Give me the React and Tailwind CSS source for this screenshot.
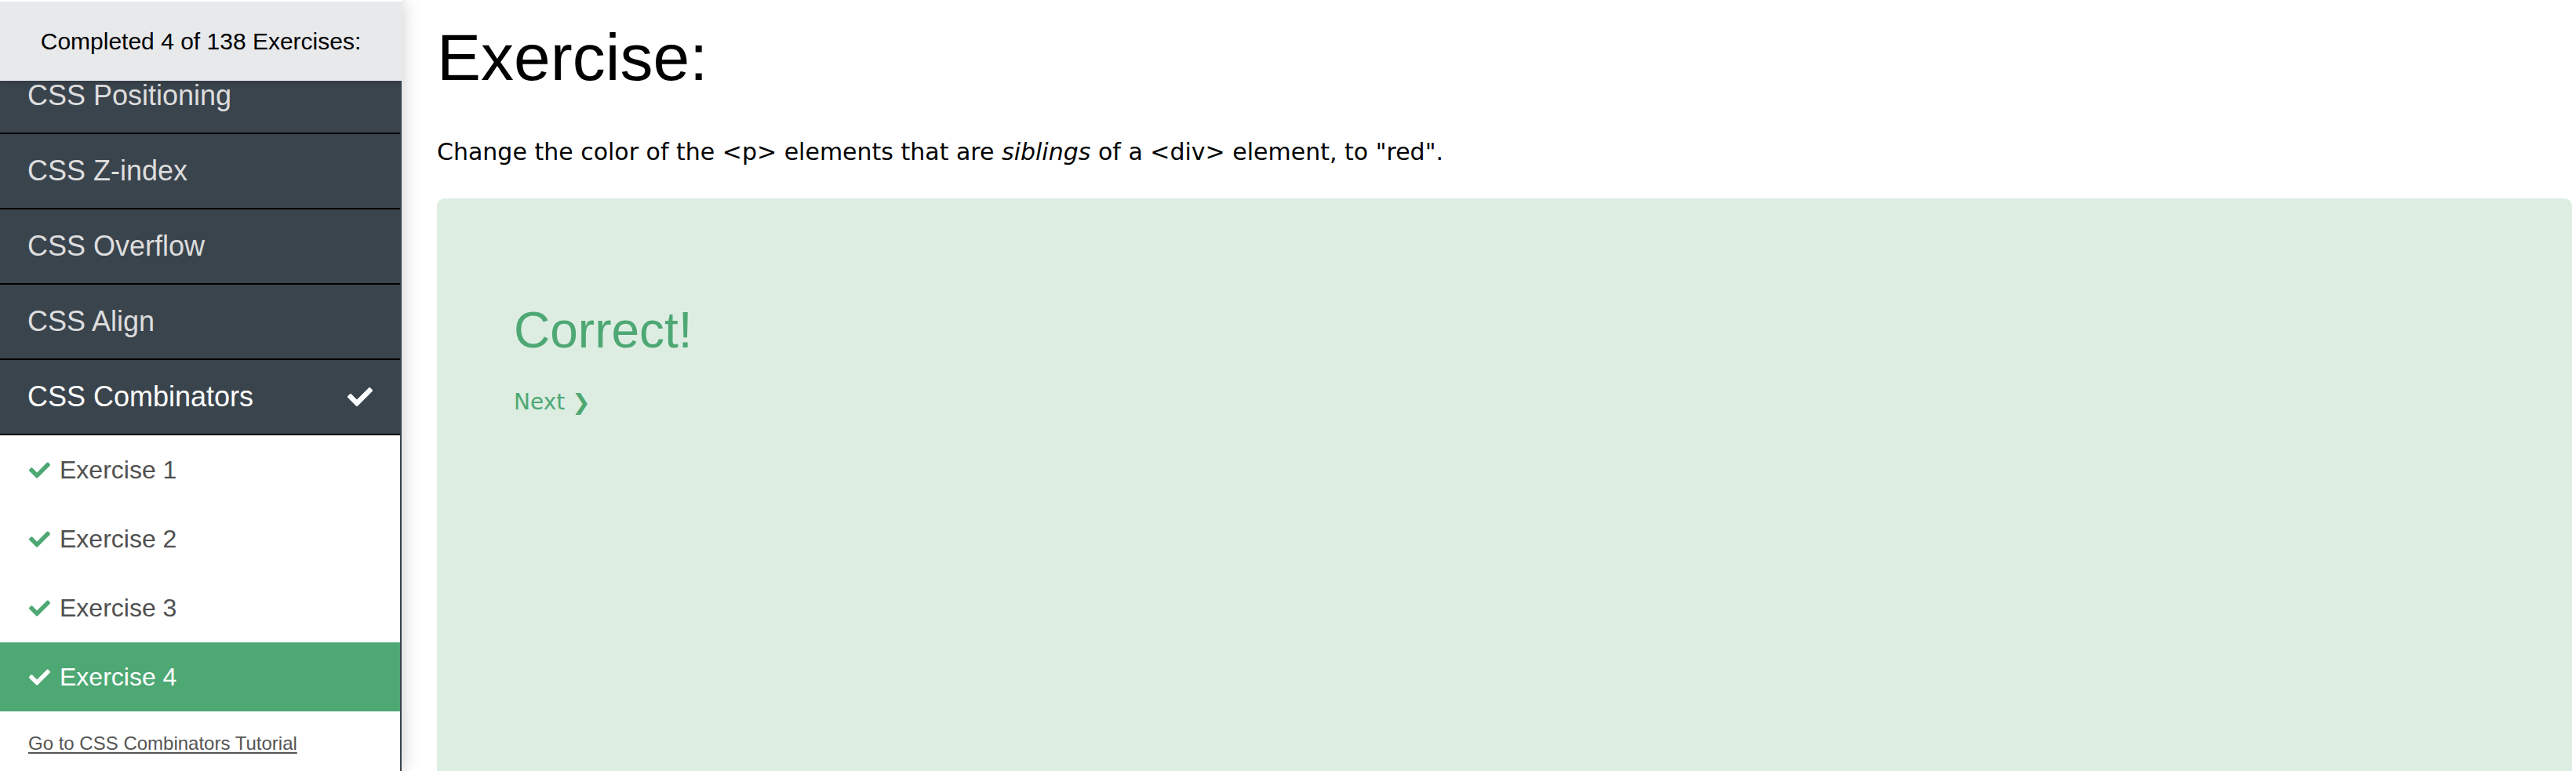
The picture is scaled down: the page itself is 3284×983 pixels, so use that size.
import { FaCheck } from 'react-icons/fa';

const topics = [
	{ name: 'CSS Positioning', first: true },
	{ name: 'CSS Z-index' },
	{ name: 'CSS Overflow' },
	{ name: 'CSS Align' },
	{ name: 'CSS Combinators', active: true },
];

const exercises = ['Exercise 1', 'Exercise 2', 'Exercise 3', 'Exercise 4'];

function Sidebar() {
	return (
		<aside className="relative z-10 flex h-[983px] w-[512px] shrink-0 flex-col overflow-hidden bg-[#3a444d] shadow-[0_0_22px_rgba(0,0,0,0.22)] font-['Liberation_Sans',Arial,sans-serif]">
			<div className="relative z-10 flex h-[103px] shrink-0 items-center justify-center border-t-2 border-white bg-[#e7e9eb] text-[30px] text-black shadow-[0_3px_6px_rgba(0,0,0,0.12)]">
				Completed 4 of 138 Exercises:
			</div>

			<div className="-mt-[28px] mr-[2px]">
				{topics.map((t) => (
					<div
						key={t.name}
						className={
							'flex h-[96px] items-center justify-between border-b-2 border-black pl-[35px] pr-[35px] text-[36px] ' +
							(t.active ? 'text-white' : 'text-[#dddddd]')
						}
					>
						<span>{t.name}</span>
						{t.active && <FaCheck size={32} className="text-white" />}
					</div>
				))}

				<div className="bg-white">
					{exercises.map((ex, i) => {
						const current = i === exercises.length - 1;
						return (
							<div
								key={ex}
								className={
									'flex h-[88px] items-center gap-[12px] pl-[37px] text-[32px] ' +
									(current ? 'bg-[#4ea874] text-white' : 'text-[#505050]')
								}
							>
								<FaCheck size={27} className={current ? 'text-white' : 'text-[#4ea874]'} />
								<span>{ex}</span>
							</div>
						);
					})}
					<div className="h-[200px] pl-[36px] pt-[23px]">
						<a href="#" className="text-[24px] text-[#555555] underline underline-offset-[3px]">
							Go to CSS Combinators Tutorial
						</a>
					</div>
				</div>
			</div>
		</aside>
	);
}

export default function App() {
	return (
		<div className="flex h-[983px] w-[3284px] overflow-hidden bg-white">
			<Sidebar />

			<main className="flex min-w-0 flex-1 flex-col pl-[45px] pr-[5px]">
				<h1 className="mt-[31px] text-[84px] leading-none font-normal text-black font-['Liberation_Sans',Arial,sans-serif]">
					Exercise:
				</h1>

				<p className="mt-[61px] text-[30px] leading-[36px] text-black font-['DejaVu_Sans',Verdana,sans-serif]">
					Change the color of the &lt;p&gt; elements that are <i>siblings</i> of a &lt;div&gt; element, to "red".
				</p>

				<section className="mt-[41px] flex-1 rounded-t-[10px] bg-[#ddede2] pl-[98px] pt-[136px]">
					<h2 className="text-[64px] leading-none font-normal text-[#4ea874] font-['Liberation_Sans',Arial,sans-serif]">
						Correct!
					</h2>
					<a
						href="#"
						className="mt-[42px] block text-[28px] leading-[36px] text-[#4ea874] font-['DejaVu_Sans',Verdana,sans-serif]"
					>
						Next ❯
					</a>
				</section>
			</main>
		</div>
	);
}
